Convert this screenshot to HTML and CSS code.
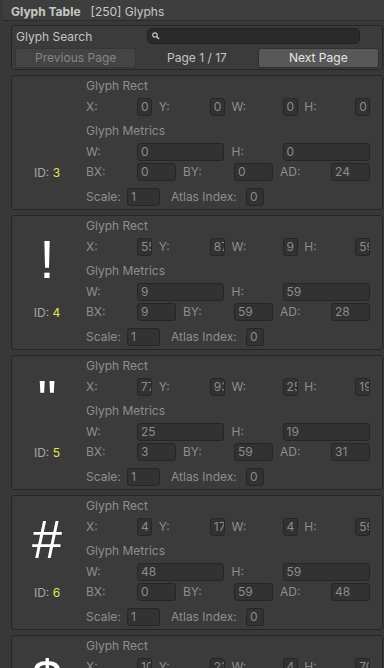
FILE: index.html
```html
<!DOCTYPE html>
<html lang="en">
<head>
    <meta charset="utf-8">
    <title>Glyph Table</title>
    <link rel="stylesheet" href="styles.css">
</head>
<body>
<div class="header"><b>Glyph Table</b><span class="count">[250] Glyphs</span></div>

<div class="panel">
    <div class="search-row">
        <span class="search-label">Glyph Search</span>
        <div class="search-field">
            <svg width="8" height="8" viewBox="0 0 8 8"><circle cx="3" cy="3" r="2.2" fill="none" stroke="#c8c8c8" stroke-width="1.2"/><path d="M4.6 4.6 L7 7" stroke="#c8c8c8" stroke-width="1.4"/></svg>
        </div>
    </div>
    <div class="pager">
        <div class="btn disabled">Previous Page</div>
        <div class="page">Page 1 / 17</div>
        <div class="btn">Next Page</div>
    </div>
</div>

<div class="card">
    <div class="preview">
        <div class="glyph">&nbsp;</div>
        <div class="glyph-id">ID: <span>3</span></div>
    </div>
    <div class="props">
        <div class="title">Glyph Rect</div>
        <div class="row rect">
            <div class="cell"><span class="lbl">X:</span><span class="fld">0</span></div>
            <div class="cell"><span class="lbl">Y:</span><span class="fld">0</span></div>
            <div class="cell"><span class="lbl">W:</span><span class="fld">0</span></div>
            <div class="cell"><span class="lbl">H:</span><span class="fld">0</span></div>
        </div>
        <div class="title title-2">Glyph Metrics</div>
        <div class="row size">
            <div class="cell"><span class="lbl">W:</span><span class="fld">0</span></div>
            <div class="cell"><span class="lbl">H:</span><span class="fld">0</span></div>
        </div>
        <div class="row bearing">
            <div class="cell"><span class="lbl">BX:</span><span class="fld">0</span></div>
            <div class="cell"><span class="lbl">BY:</span><span class="fld">0</span></div>
            <div class="cell"><span class="lbl">AD:</span><span class="fld">24</span></div>
        </div>
        <div class="row scale">
            <span class="lbl scale-lbl">Scale:</span><span class="fld scale-fld">1</span>
            <span class="lbl atlas-lbl">Atlas Index:</span><span class="fld atlas-fld">0</span>
        </div>
    </div>
</div>

<div class="card">
    <div class="preview">
        <div class="glyph">!</div>
        <div class="glyph-id">ID: <span>4</span></div>
    </div>
    <div class="props">
        <div class="title">Glyph Rect</div>
        <div class="row rect">
            <div class="cell"><span class="lbl">X:</span><span class="fld">55</span></div>
            <div class="cell"><span class="lbl">Y:</span><span class="fld">87</span></div>
            <div class="cell"><span class="lbl">W:</span><span class="fld">9</span></div>
            <div class="cell"><span class="lbl">H:</span><span class="fld">59</span></div>
        </div>
        <div class="title title-2">Glyph Metrics</div>
        <div class="row size">
            <div class="cell"><span class="lbl">W:</span><span class="fld">9</span></div>
            <div class="cell"><span class="lbl">H:</span><span class="fld">59</span></div>
        </div>
        <div class="row bearing">
            <div class="cell"><span class="lbl">BX:</span><span class="fld">9</span></div>
            <div class="cell"><span class="lbl">BY:</span><span class="fld">59</span></div>
            <div class="cell"><span class="lbl">AD:</span><span class="fld">28</span></div>
        </div>
        <div class="row scale">
            <span class="lbl scale-lbl">Scale:</span><span class="fld scale-fld">1</span>
            <span class="lbl atlas-lbl">Atlas Index:</span><span class="fld atlas-fld">0</span>
        </div>
    </div>
</div>

<div class="card">
    <div class="preview">
        <div class="glyph">"</div>
        <div class="glyph-id">ID: <span>5</span></div>
    </div>
    <div class="props">
        <div class="title">Glyph Rect</div>
        <div class="row rect">
            <div class="cell"><span class="lbl">X:</span><span class="fld">77</span></div>
            <div class="cell"><span class="lbl">Y:</span><span class="fld">93</span></div>
            <div class="cell"><span class="lbl">W:</span><span class="fld">25</span></div>
            <div class="cell"><span class="lbl">H:</span><span class="fld">19</span></div>
        </div>
        <div class="title title-2">Glyph Metrics</div>
        <div class="row size">
            <div class="cell"><span class="lbl">W:</span><span class="fld">25</span></div>
            <div class="cell"><span class="lbl">H:</span><span class="fld">19</span></div>
        </div>
        <div class="row bearing">
            <div class="cell"><span class="lbl">BX:</span><span class="fld">3</span></div>
            <div class="cell"><span class="lbl">BY:</span><span class="fld">59</span></div>
            <div class="cell"><span class="lbl">AD:</span><span class="fld">31</span></div>
        </div>
        <div class="row scale">
            <span class="lbl scale-lbl">Scale:</span><span class="fld scale-fld">1</span>
            <span class="lbl atlas-lbl">Atlas Index:</span><span class="fld atlas-fld">0</span>
        </div>
    </div>
</div>

<div class="card">
    <div class="preview">
        <div class="glyph">#</div>
        <div class="glyph-id">ID: <span>6</span></div>
    </div>
    <div class="props">
        <div class="title">Glyph Rect</div>
        <div class="row rect">
            <div class="cell"><span class="lbl">X:</span><span class="fld">4</span></div>
            <div class="cell"><span class="lbl">Y:</span><span class="fld">172</span></div>
            <div class="cell"><span class="lbl">W:</span><span class="fld">4</span></div>
            <div class="cell"><span class="lbl">H:</span><span class="fld">59</span></div>
        </div>
        <div class="title title-2">Glyph Metrics</div>
        <div class="row size">
            <div class="cell"><span class="lbl">W:</span><span class="fld">48</span></div>
            <div class="cell"><span class="lbl">H:</span><span class="fld">59</span></div>
        </div>
        <div class="row bearing">
            <div class="cell"><span class="lbl">BX:</span><span class="fld">0</span></div>
            <div class="cell"><span class="lbl">BY:</span><span class="fld">59</span></div>
            <div class="cell"><span class="lbl">AD:</span><span class="fld">48</span></div>
        </div>
        <div class="row scale">
            <span class="lbl scale-lbl">Scale:</span><span class="fld scale-fld">1</span>
            <span class="lbl atlas-lbl">Atlas Index:</span><span class="fld atlas-fld">0</span>
        </div>
    </div>
</div>

<div class="card">
    <div class="preview">
        <div class="glyph">$</div>
        <div class="glyph-id">ID: <span>7</span></div>
    </div>
    <div class="props">
        <div class="title">Glyph Rect</div>
        <div class="row rect">
            <div class="cell"><span class="lbl">X:</span><span class="fld">106</span></div>
            <div class="cell"><span class="lbl">Y:</span><span class="fld">233</span></div>
            <div class="cell"><span class="lbl">W:</span><span class="fld">4</span></div>
            <div class="cell"><span class="lbl">H:</span><span class="fld">70</span></div>
        </div>
        <div class="title title-2">Glyph Metrics</div>
        <div class="row size">
            <div class="cell"><span class="lbl">W:</span><span class="fld">41</span></div>
            <div class="cell"><span class="lbl">H:</span><span class="fld">70</span></div>
        </div>
    </div>
</div>
</body>
</html>
```

FILE: styles.css
```css
html {
    overflow: hidden;
}

body {
    margin: 0;
    height: 668px;
    overflow: hidden;
    background: #383838;
    font-family: "Inter", "Noto Sans", sans-serif;
    font-size: 12px;
    color: #c4c4c4;
}

.header {
    margin-left: 3px;
    height: 17px;
    padding: 3px 0 0 8px;
    line-height: 18px;
    background: #3e3e3e;
    border-bottom: 1px solid #2b2b2b;
    color: #c8c8c8;
}

.header b {
    font-weight: 700;
}

.count {
    margin-left: 10px;
}

.panel {
    margin: 4px 1px 0 11px;
    height: 45px;
    box-sizing: border-box;
    padding: 2px 3px 1px 3px;
    background: #3b3b3b;
    border: 1px solid #262626;
    border-radius: 3px;
}

.search-row {
    display: flex;
    height: 16px;
    align-items: center;
}

.search-label {
    width: 131px;
    margin-left: 1px;
    line-height: 16px;
    padding-top: 1px;
}

.search-field {
    width: 213px;
    height: 16px;
    box-sizing: border-box;
    background: #2a2a2a;
    border: 1px solid #212121;
    border-radius: 5px;
    display: flex;
    align-items: center;
    padding-left: 4px;
}

.pager {
    margin-top: 4px;
    display: grid;
    grid-template-columns: repeat(3, 1fr);
    height: 20px;
}

.btn {
    box-sizing: border-box;
    height: 20px;
    line-height: 18px;
    text-align: center;
    background: #585858;
    border: 1px solid #303030;
    border-radius: 3px;
    color: #e6e6e6;
}

.btn.disabled {
    background: #444444;
    border-color: #363636;
    color: #858585;
}

.page {
    text-align: center;
    line-height: 20px;
}

.card {
    display: flex;
    margin: 5px 1px 0 11px;
    height: 135px;
    box-sizing: border-box;
    background: #3b3b3b;
    border: 1px solid #262626;
    border-radius: 3px;
    flex-shrink: 0;
}

.preview {
    width: 70px;
    padding-top: 13px;
    text-align: center;
}

.glyph {
    height: 60px;
    line-height: 60px;
    font-family: "Liberation Sans", Arial, sans-serif;
    font-size: 54px;
    color: #ffffff;
}

.glyph-id {
    margin-top: 15px;
    line-height: 18px;
    color: #a6a6a6;
}

.glyph-id span {
    color: #e4e45c;
}

.props {
    flex: 1;
    padding: 1px 5px 0 4px;
    color: #8e8e8e;
}

.title {
    height: 18px;
    line-height: 18px;
}

.title-2 {
    margin-top: 6px;
}

.row {
    display: flex;
    height: 18px;
    align-items: center;
}

.rect {
    margin-top: 3px;
}

.size {
    margin-top: 3px;
}

.bearing {
    margin-top: 2px;
}

.scale {
    margin-top: 7px;
}

.cell {
    flex: 1;
    display: flex;
    align-items: center;
}

.lbl {
    width: 51px;
    flex: none;
    line-height: 18px;
}

.fld {
    box-sizing: border-box;
    height: 18px;
    line-height: 16px;
    padding-left: 3px;
    background: #323232;
    border: 1px solid #262626;
    border-radius: 3px;
    overflow: hidden;
    white-space: nowrap;
    color: #8c8c8c;
    flex: none;
}

.rect .fld {
    width: 15px;
}

.size .fld {
    width: 87px;
}

.bearing .fld {
    width: 39px;
}

.scale-lbl {
    width: 41px;
}

.scale-fld {
    width: 33px;
}

.atlas-lbl {
    width: 75px;
    margin-left: 11px;
}

.atlas-fld {
    width: 18px;
}
```
